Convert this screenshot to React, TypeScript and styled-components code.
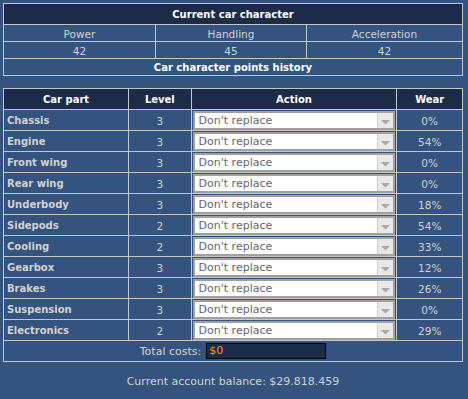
import styled, { createGlobalStyle } from "styled-components";

const GlobalStyle = createGlobalStyle`
  html, body {
    margin: 0;
    padding: 0;
    background: #34537f;
  }
  body {
    font-family: "DejaVu Sans", Verdana, sans-serif;
    font-size: 10px;
    color: #d2d2d2;
  }
`;

const character = [
  { label: "Power", value: 42 },
  { label: "Handling", value: 45 },
  { label: "Acceleration", value: 42 },
];

const parts = [
  { name: "Chassis", level: 3, wear: "0%" },
  { name: "Engine", level: 3, wear: "54%" },
  { name: "Front wing", level: 3, wear: "0%" },
  { name: "Rear wing", level: 3, wear: "0%" },
  { name: "Underbody", level: 3, wear: "18%" },
  { name: "Sidepods", level: 2, wear: "54%" },
  { name: "Cooling", level: 2, wear: "33%" },
  { name: "Gearbox", level: 3, wear: "12%" },
  { name: "Brakes", level: 3, wear: "26%" },
  { name: "Suspension", level: 3, wear: "0%" },
  { name: "Electronics", level: 2, wear: "29%" },
];

export default function App() {
  return (
    <Page>
      <GlobalStyle />
      <Table>
        <colgroup>
          <col style={{ width: 151 }} />
          <col style={{ width: 150 }} />
          <col style={{ width: 155 }} />
        </colgroup>
        <tbody>
          <tr>
            <HeadCell colSpan={3}>Current car character</HeadCell>
          </tr>
          <tr>
            {character.map((c) => (
              <Cell key={c.label} $h={15} $align="center">
                {c.label}
              </Cell>
            ))}
          </tr>
          <tr>
            {character.map((c) => (
              <Cell key={c.label} $h={15} $align="center">
                {c.value}
              </Cell>
            ))}
          </tr>
          <tr>
            <SubHead colSpan={3}>Car character points history</SubHead>
          </tr>
        </tbody>
      </Table>

      <Spacer />

      <Table>
        <colgroup>
          <col style={{ width: 124 }} />
          <col style={{ width: 62 }} />
          <col style={{ width: 204 }} />
          <col style={{ width: 65 }} />
        </colgroup>
        <thead>
          <tr>
            <HeadCell>Car part</HeadCell>
            <HeadCell>Level</HeadCell>
            <HeadCell>Action</HeadCell>
            <HeadCell>Wear</HeadCell>
          </tr>
        </thead>
        <tbody>
          {parts.map((p) => (
            <tr key={p.name}>
              <PartCell>{p.name}</PartCell>
              <Cell $h={19} $align="center">
                {p.level}
              </Cell>
              <SelectCell>
                <FakeSelect>
                  <SelectText>Don't replace</SelectText>
                  <SelectButton>
                    <svg width="9" height="5" viewBox="0 0 9 5">
                      <path d="M0 0 H9 L4.5 4.5 Z" fill="#a8a8a8" />
                    </svg>
                  </SelectButton>
                </FakeSelect>
              </SelectCell>
              <Cell $h={19} $align="center">
                {p.wear}
              </Cell>
            </tr>
          ))}
          <tr>
            <TotalCell colSpan={4}>
              <TotalWrap>
                <span>Total costs:</span>
                <CostBox>$0</CostBox>
              </TotalWrap>
            </TotalCell>
          </tr>
        </tbody>
      </Table>

      <Balance>Current account balance: $29.818.459</Balance>
    </Page>
  );
}

const Page = styled.div`
  width: 468px;
  height: 399px;
  box-sizing: border-box;
  padding: 3px 0 0 3px;
  background: #34537f;
  overflow: hidden;
`;

const Table = styled.table`
  width: 460px;
  border-collapse: collapse;
  table-layout: fixed;
  border: 1px solid #c6c6c6;
`;

const Cell = styled.td<{ $h: number; $align?: string }>`
  height: ${({ $h }) => $h}px;
  padding: 1px 3px 0;
  border: 1px solid #c6c6c6;
  text-align: ${({ $align }) => $align ?? "left"};
  color: #d2d2d2;
  font-size: 10.5px;
  line-height: 12px;
  vertical-align: middle;
`;

const HeadCell = styled.th`
  height: 19px;
  padding: 1px 3px 0;
  border: 1px solid #c6c6c6;
  background: #1c2b47;
  color: #ffffff;
  font-weight: bold;
  text-align: center;
  line-height: 12px;
`;

const SubHead = styled.td`
  height: 15px;
  padding: 1px 3px 0;
  border: 1px solid #c6c6c6;
  color: #ffffff;
  font-weight: bold;
  text-align: center;
  line-height: 12px;
`;

const PartCell = styled.td`
  height: 19px;
  padding: 1px 3px 0;
  border: 1px solid #c6c6c6;
  color: #d2d2d2;
  font-weight: bold;
  line-height: 12px;
`;

const SelectCell = styled.td`
  height: 20px;
  padding: 0 1px;
  border: 1px solid #c6c6c6;
`;

const FakeSelect = styled.div`
  box-sizing: border-box;
  height: 19px;
  width: 202px;
  display: flex;
  align-items: stretch;
  background: #ffffff;
  border: 2px solid #a0a0a0;
`;

const SelectText = styled.div`
  flex: 1;
  padding-left: 4px;
  display: flex;
  align-items: center;
  color: #676470;
  font-size: 11px;
`;

const SelectButton = styled.div`
  width: 15px;
  background: #e8e8e8;
  border-left: 1px solid #d0d0d0;
  display: flex;
  align-items: flex-end;
  justify-content: center;
  padding-bottom: 3px;
`;

const TotalCell = styled.td`
  height: 20px;
  padding: 0;
  border: 1px solid #c6c6c6;
`;

const TotalWrap = styled.div`
  display: flex;
  align-items: center;
  justify-content: center;
  gap: 5px;
  color: #d2d2d2;
  font-size: 11px;
`;

const CostBox = styled.div`
  box-sizing: border-box;
  width: 120px;
  height: 16px;
  background: #1c2b47;
  border: 1px solid #000000;
  color: #ff9900;
  font-size: 11px;
  line-height: 14px;
  padding-left: 2px;
`;

const Spacer = styled.div`
  height: 12px;
`;

const Balance = styled.div`
  margin-top: 13px;
  width: 460px;
  text-align: center;
  color: #d2d2d2;
  font-size: 11px;
`;
